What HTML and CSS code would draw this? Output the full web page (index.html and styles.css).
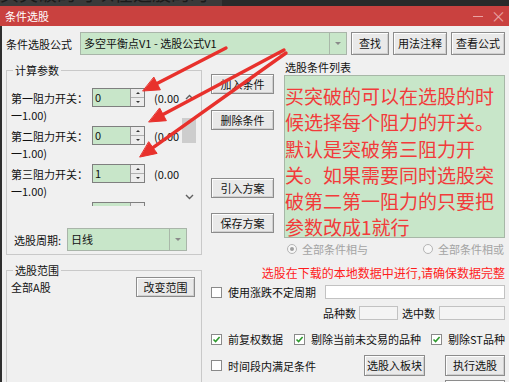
FILE: index.html
```html
<!DOCTYPE html>
<html lang="zh">
<head>
<meta charset="utf-8">
<title>条件选股</title>
<link rel="stylesheet" href="styles.css">
</head>
<body>
<div class="topstrip"><div class="ts-left"><span>买突破的可以在选股的时</span></div></div>
<div class="titlebar"><span class="title">条件选股</span><span class="ctrls"><span class="min"></span><span class="close">×</span></span></div>
<div class="window">
  <div class="toprow">
    <span class="toplabel">条件选股公式</span>
    <div class="combo formula"><span class="combo-text">多空平衡点V1 - 选股公式V1</span><span class="drop"><i></i></span></div>
    <button class="btn b-find">查找</button>
    <button class="btn b-note">用法注释</button>
    <button class="btn b-note">查看公式</button>
  </div>
  <div class="main">
    <div class="leftcol">
      <fieldset class="grp params">
        <legend>计算参数</legend>
        <div class="scrollarea">
          <div class="rows">
            <div class="prow">
              <div class="pline"><span class="plabel">第一阻力开关：</span><span class="spin"><span class="spin-val">0</span><span class="spin-btns"><i class="up"></i><i class="dn"></i></span></span><span class="range1">(0.00</span></div>
              <div class="pline2">一1.00)</div>
            </div>
            <div class="prow">
              <div class="pline"><span class="plabel">第二阻力开关：</span><span class="spin"><span class="spin-val">0</span><span class="spin-btns"><i class="up"></i><i class="dn"></i></span></span><span class="range1">(0.00</span></div>
              <div class="pline2">一1.00)</div>
            </div>
            <div class="prow">
              <div class="pline"><span class="plabel">第三阻力开关：</span><span class="spin"><span class="spin-val">1</span><span class="spin-btns"><i class="up"></i><i class="dn"></i></span></span><span class="range1">(0.00</span></div>
              <div class="pline2">一1.00)</div>
            </div>
            <div class="prow last">
              <div class="pline"><span class="plabel">第四阻力开关：</span><span class="spin"><span class="spin-val">0</span><span class="spin-btns"><i class="up"></i><i class="dn"></i></span></span><span class="range1">(0.00</span></div>
            </div>
          </div>
          <div class="vscroll">
            <div class="sb-arrow"><svg width="9" height="6" viewBox="0 0 9 6"><path d="M1 5 L4.5 1.5 L8 5" fill="none" stroke="#606060" stroke-width="1.4"/></svg></div>
            <div class="sb-track"><div class="sb-thumb"></div></div>
            <div class="sb-arrow"><svg width="9" height="6" viewBox="0 0 9 6"><path d="M1 1 L4.5 4.5 L8 1" fill="none" stroke="#606060" stroke-width="1.4"/></svg></div>
          </div>
        </div>
        <div class="period">
          <span class="period-label">选股周期:</span>
          <div class="combo pcombo"><span class="combo-text">日线</span><span class="drop"><i></i></span></div>
        </div>
      </fieldset>
      <fieldset class="grp scope">
        <legend>选股范围</legend>
        <div class="scoperow"><span>全部A股</span><button class="btn b-scope">改变范围</button></div>
      </fieldset>
    </div>
    <div class="rightcol">
      <div class="upper">
        <div class="btncol">
          <button class="btn b-side">加入条件</button>
          <button class="btn b-side b-del">删除条件</button>
          <button class="btn b-side b-imp">引入方案</button>
          <button class="btn b-side b-save">保存方案</button>
        </div>
        <div class="listcol">
          <div class="listlabel">选股条件列表</div>
          <div class="listbox">买突破的可以在选股的时<br>候选择每个阻力的开关。<br>默认是突破第三阻力开<br>关。如果需要同时选股突<br>破第二第一阻力的只要把<br>参数改成1就行</div>
        </div>
      </div>
      <div class="radios">
        <span class="radio-item"><span class="radio on"></span><span class="rlabel">全部条件相与</span></span>
        <span class="radio-item"><span class="radio"></span><span class="rlabel">全部条件相或</span></span>
      </div>
      <div class="warn">选股在下载的本地数据中进行,请确保数据完整</div>
      <div class="frow r-period">
        <span class="cb"></span><span class="cblabel">使用涨跌不定周期</span><span class="field f-wide"></span>
      </div>
      <div class="frow r-count">
        <span>品种数</span><span class="field f-count"></span><span class="sel-label">选中数</span><span class="field f-sel"></span>
      </div>
      <div class="frow r-checks">
        <span class="cb checked"><svg width="9" height="9" viewBox="0 0 9 9"><path d="M1.5 4.5 L3.6 6.6 L7.6 2" fill="none" stroke="#2e9a2e" stroke-width="1.6"/></svg></span><span class="cblabel">前复权数据</span>
        <span class="cb checked c2"><svg width="9" height="9" viewBox="0 0 9 9"><path d="M1.5 4.5 L3.6 6.6 L7.6 2" fill="none" stroke="#2e9a2e" stroke-width="1.6"/></svg></span><span class="cblabel">剔除当前未交易的品种</span>
        <span class="cb checked c3"><svg width="9" height="9" viewBox="0 0 9 9"><path d="M1.5 4.5 L3.6 6.6 L7.6 2" fill="none" stroke="#2e9a2e" stroke-width="1.6"/></svg></span><span class="cblabel">剔除ST品种</span>
      </div>
      <div class="frow r-last">
        <span class="cb"></span><span class="cblabel">时间段内满足条件</span>
        <button class="btn b-block">选股入板块</button>
        <button class="btn b-run">执行选股</button>
      </div>
      <div class="r-more"><span class="btn-stub"></span></div>
    </div>
  </div>
</div>
<svg class="arrows" width="509" height="382" viewBox="0 0 509 382">
  <g fill="#e8312c" stroke="#e8312c" stroke-linecap="round">
    <line x1="157" y1="83.6" x2="226" y2="48" stroke-width="3.4"/>
    <polygon points="143,91 160.4,89.8 154,77.4" stroke-width="1" stroke-linejoin="round"/>
    <line x1="163" y1="114.5" x2="284" y2="50" stroke-width="3.4"/>
    <polygon points="149,122 166.4,120.7 159.8,108.3" stroke-width="1" stroke-linejoin="round"/>
    <line x1="153" y1="147.7" x2="286" y2="53" stroke-width="3.4"/>
    <polygon points="140,157 157.1,153.4 148.9,142" stroke-width="1" stroke-linejoin="round"/>
  </g>
</svg>
</body>
</html>
```
FILE: styles.css
```css
* { box-sizing: border-box; }
html, body { margin: 0; padding: 0; }
body {
  width: 509px;
  height: 382px;
  overflow: hidden;
  position: relative;
  background: #f0f0f0;
  font-family: "Noto Sans CJK SC", "Noto Sans", sans-serif;
  font-size: 11px;
  color: #111;
}

/* dark strip above the dialog */
.topstrip { height: 6px; background: #2a2a2a; overflow: hidden; }
.ts-left { width: 222px; height: 6px; background: #3a3a3a; overflow: hidden; }
.ts-left span {
  display: block;
  margin-top: -17px;
  font-size: 19px;
  line-height: 20px;
  color: #1a1a1a;
  white-space: nowrap;
}

/* title bar */
.titlebar {
  height: 20px;
  background: #c9413f;
  display: flex;
  align-items: center;
  justify-content: space-between;
  padding: 0 3px 0 5px;
  color: #fff;
}
.title { font-size: 11px; line-height: 14px; }
.ctrls { display: flex; align-items: center; color: #eaa3a3; }
.min { width: 10px; height: 1px; background: #eaa3a3; margin-right: 8px; }
.close { font-size: 15px; line-height: 14px; }

/* window body */
.window {
  height: 356px;
  overflow: hidden;
  border-left: 2px solid #2e2e2e;
  padding: 0 5px 0 2px;
}

.toprow {
  display: flex;
  align-items: center;
  height: 23px;
  margin-top: 6px;
}
.toplabel { margin-left: 2px; width: 66px; flex-shrink: 0; white-space: nowrap; }

.combo {
  display: flex;
  align-items: stretch;
  background: #c8e6c9;
  border: 1px solid #a9b5a9;
  flex-shrink: 0;
}
.combo-text { flex: 1; padding-left: 3px; line-height: 21px; white-space: nowrap; overflow: hidden; }
.drop {
  width: 17px;
  border-left: 1px solid #a9b8a9;
  display: flex;
  align-items: center;
  justify-content: center;
}
.drop i {
  width: 0; height: 0;
  border-left: 3px solid transparent;
  border-right: 3px solid transparent;
  border-top: 3px solid #8a8a8a;
}
.formula { width: 267px; height: 23px; margin-left: 8px; }

.btn {
  font-family: inherit;
  font-size: 11px;
  color: #111;
  background: #e9e9e9;
  border: 1px solid #8c8c8c;
  box-shadow: inset 1px 1px 0 #fdfdfd, inset -1px -1px 0 #cfcfcf;
  padding: 0;
  margin: 0;
  flex-shrink: 0;
  line-height: 1;
}
.b-find { width: 38px; height: 23px; margin-left: 4px; }
.b-note { width: 54px; height: 23px; margin-left: 4px; }

.main { display: flex; margin-top: 5px; }
.leftcol { width: 196px; flex-shrink: 0; margin-left: 2px; }
.rightcol { width: 295px; flex-shrink: 0; margin-left: 9px; }

/* group boxes */
.grp {
  margin: 0;
  border: 1px solid #c9c9c9;
  padding: 0 5px 3px 4px;
  min-width: 0;
}
.grp legend {
  margin-left: 2px;
  padding: 0 2px;
  line-height: 14px;
  font-size: 11px;
}
.params { margin-top: 3px; }

.scrollarea { display: flex; height: 118px; margin-top: 11px; overflow: hidden; }
.rows { flex: 1; overflow: hidden; }
.prow { height: 38px; }
.prow.last { height: 4px; overflow: hidden; }
.pline { display: flex; align-items: center; height: 19px; }
.plabel { width: 81px; flex-shrink: 0; white-space: nowrap; }
.spin {
  display: flex;
  width: 53px;
  height: 19px;
  border: 1px solid #7f7f7f;
  background: #c8e6c9;
}
.spin-val { flex: 1; padding-left: 2px; line-height: 17px; }
.spin-btns {
  width: 14px;
  display: flex;
  flex-direction: column;
  border-left: 1px solid #9a9a9a;
  background: #ececec;
}
.spin-btns i {
  flex: 1;
  display: flex;
  align-items: center;
  justify-content: center;
}
.spin-btns i.up { border-bottom: 1px solid #b0b0b0; }
.spin-btns i::after {
  content: "";
  width: 0; height: 0;
  border-left: 2px solid transparent;
  border-right: 2px solid transparent;
}
.spin-btns i.up::after { border-bottom: 2px solid #333; }
.spin-btns i.dn::after { border-top: 2px solid #333; }
.range1 { margin-left: 9px; white-space: nowrap; }
.pline2 { height: 19px; line-height: 17px; white-space: nowrap; }

.vscroll { width: 14px; display: flex; flex-direction: column; }
.sb-arrow { height: 18px; display: flex; align-items: center; justify-content: center; }
.sb-track { flex: 1; }
.sb-thumb { margin-top: 12px; height: 25px; background: #cdcdcd; }

.period { display: flex; align-items: center; margin-top: 22px; height: 23px; }
.period-label { width: 56px; padding-left: 3px; white-space: nowrap; flex-shrink: 0; }
.pcombo { width: 120px; height: 23px; }

.scope { margin-top: 8px; height: 140px; }
.scoperow {
  display: flex;
  align-items: center;
  justify-content: space-between;
  height: 20px;
  padding-right: 1px;
}
.b-scope { width: 59px; height: 20px; }

/* right side */
.upper { display: flex; }
.btncol { width: 63px; flex-shrink: 0; padding-top: 14px; display: flex; flex-direction: column; }
.b-side { width: 63px; height: 20px; }
.b-del { margin-top: 16px; }
.b-imp { margin-top: 48px; }
.b-save { margin-top: 15px; }
.listcol { margin-left: 10px; width: 221px; }
.listlabel { line-height: 14px; height: 14px; padding-left: 1px; white-space: nowrap; }
.listbox {
  margin-top: 1px;
  height: 163px;
  background: #c8e6c9;
  border: 1px solid #a7b7a7;
  padding-top: 7px;
  font-size: 19px;
  line-height: 26.3px;
  color: #f23b3b;
  white-space: nowrap;
  overflow: hidden;
}

.radios {
  display: flex;
  justify-content: space-between;
  align-items: center;
  height: 18px;
  margin-top: 2px;
  padding-left: 76px;
  padding-right: 2px;
  color: #a3a3a3;
}
.radio-item { display: flex; align-items: center; }
.radio {
  width: 10px; height: 10px;
  border-radius: 50%;
  border: 1px solid #b4b4b4;
  background: #f7f7f7;
  display: flex; align-items: center; justify-content: center;
}
.radio.on::after { content: ""; width: 4px; height: 4px; border-radius: 50%; background: #a0a0a0; }
.rlabel { margin-left: 5px; white-space: nowrap; }

.warn {
  margin-top: 8px;
  line-height: 14px;
  height: 14px;
  text-align: right;
  padding-right: 1px;
  font-size: 12px;
  color: #ff1c1c;
  white-space: nowrap;
}

.frow { display: flex; align-items: center; white-space: nowrap; }
.cb {
  width: 11px; height: 11px;
  border: 1px solid #8a8a8a;
  background: #fff;
  flex-shrink: 0;
  display: flex; align-items: center; justify-content: center;
}
.cblabel { margin-left: 6px; }
.field { height: 14px; background: #fff; border: 1px solid #c2c2c2; flex-shrink: 0; }
.r-period { margin-top: 5px; height: 14px; padding-right: 1px; }
.f-wide { flex: 1; margin-left: 9px; }
.r-count { margin-top: 7px; height: 14px; justify-content: flex-end; padding-right: 1px; }
.f-count { width: 39px; margin-left: 3px; background: #f4f4f4; }
.sel-label { margin-left: 4px; }
.f-sel { width: 66px; margin-left: 4px; background: #f4f4f4; }
.r-checks { margin-top: 12px; height: 14px; }
.c2 { margin-left: 11px; }
.c3 { margin-left: 10px; }
.r-last { margin-top: 9px; height: 21px; padding-right: 1px; }
.b-block { width: 61px; height: 21px; margin-left: auto; }
.b-run { width: 60px; height: 21px; margin-left: 20px; }
.r-more { display: flex; justify-content: flex-end; margin-top: 4px; padding-right: 1px; height: 3px; overflow: hidden; }
.btn-stub {
  display: block;
  width: 60px;
  height: 10px;
  background: #e9e9e9;
  border: 1px solid #8c8c8c;
  box-shadow: inset 1px 1px 0 #fdfdfd;
}

.arrows { position: absolute; left: 0; top: 0; pointer-events: none; }
```
